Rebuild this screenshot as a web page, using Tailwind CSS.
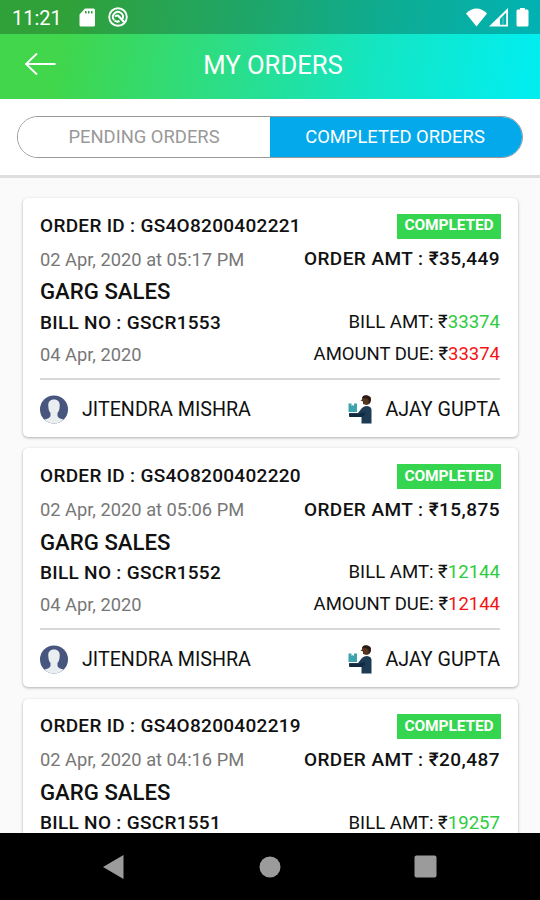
<!DOCTYPE html>
<html lang="en">
<head>
    <meta charset="UTF-8">
    <meta name="viewport" content="width=device-width, initial-scale=1.0">
    <title>My Orders</title>
    <script src="https://cdn.jsdelivr.net/npm/@tailwindcss/browser@4"></script>
</head>
<body class="w-[540px] h-[900px] overflow-hidden flex flex-col bg-[#fafafa] font-['Roboto','Noto_Sans',sans-serif] whitespace-nowrap">
    <!-- Header -->
    <header class="h-[99px] shrink-0 bg-linear-[100deg,#41d64b_12%,#27df92_48%,#13e6c4_70%,#02edee_97%] text-white">
        <!-- Status bar -->
        <div class="h-[34px] bg-black/25 flex items-center pl-3 pr-[11px]">
            <span class="text-[20px] leading-none w-[67px] pt-0.5">11:21</span>
            <svg class="w-4 h-[19px]" viewBox="0 0 16 19"><path fill="#fff" fill-rule="evenodd" d="M6 0.5H14.5Q16 .5 16 2V17Q16 18.5 14.5 18.5H2Q.5 18.5 .5 17V6.500ZM6 3V5.500H7.500V3ZM9 3V5.500H10.500V3ZM12 3V5.500H13.500V3Z"/></svg>
            <svg class="w-5 h-5 ml-[13px]" viewBox="0 0 20 20" fill="none" stroke="#fff"><circle cx="10" cy="10" r="8.800" stroke-width="1.900"/><path stroke-width="1.900" d="M6.200 13.200A5 5 0 1 1 14.500 12"/><path stroke-width="2.200" d="M7 9.500Q9.500 7.500 11 9.500L16 15M6.500 13.500Q9 15.500 11.500 14"/></svg>
            <div class="ml-auto flex items-center">
                <svg class="w-[21px] h-[19px]" viewBox="0 0 21 19"><path fill="#fff" d="M0 5.500Q10.500 -4.500 21 5.500L10.500 18.500Z"/></svg>
                <svg class="w-[19px] h-[19px] ml-[2px]" viewBox="0 0 19 19"><path fill="#fff" fill-rule="evenodd" d="M19 0V18.500H0ZM17.200 4.500L11 11V16.700H17.200Z"/><path fill="#fff" d="M13 16.700V10.500L15 8.500V16.700Z" opacity=".2"/></svg>
                <svg class="w-[13px] h-[19px] ml-[8px]" viewBox="0 0 13 19"><path fill="#fff" d="M4 0H9V1.500H11Q12.500 1.500 12.500 3V17Q12.500 18.500 11 18.500H2Q.5 18.500 .5 17V3Q.5 1.500 2 1.500H4Z"/></svg>
            </div>
        </div>
        <div class="h-[65px] grid grid-cols-[60px_1fr_60px] items-center">
            <svg class="w-[32px] h-6 ml-6 mb-[5px]" viewBox="0 0 32 24" fill="none" stroke="#fff" stroke-width="1.800"><path d="M31.500 12H2M13 1.500L2 12L13 22.500"/></svg>
            <h1 class="text-center text-[25.600px] leading-none pl-[6px] pb-px">MY ORDERS</h1>
        </div>
    </header>

    <!-- Tabs -->
    <div class="h-[79px] shrink-0 bg-white border-b-[3px] border-[#dedede] px-[17px] pt-[17px]">
        <div class="h-[42px] flex rounded-full overflow-hidden border border-[#999] text-[18.400px]">
            <button class="w-[252px] bg-white text-[#999]">PENDING ORDERS</button>
            <button class="flex-1 bg-[#03a9ea] text-white pr-0.5">COMPLETED ORDERS</button>
        </div>
    </div>

    <!-- Order list -->
    <main id="orders" class="flex-1 min-h-0 overflow-hidden flex flex-col gap-[11.300px] pl-[23px] pr-[22px] pt-5"></main>

    <!-- Navigation bar -->
    <nav class="h-[67px] shrink-0 bg-black flex items-center justify-between px-[103px]">
        <svg class="w-[21px] h-[26px]" viewBox="0 0 21 26"><path fill="#9b9b9b" d="M0 13L20.500 1V25Z"/></svg>
        <svg class="w-[22px] h-[22px] ml-0.5" viewBox="0 0 22 22"><circle cx="11" cy="11" r="10.500" fill="#9b9b9b"/></svg>
        <svg class="w-[23px] h-[23px]" viewBox="0 0 23 23"><rect x=".5" y=".5" width="22" height="22" rx="2" fill="#9b9b9b"/></svg>
    </nav>

    <script>
        const orders = [
            { id: 'GS4O8200402221', time: '05:17 PM', amt: '35,449', bill: 'GSCR1553', due: '33374' },
            { id: 'GS4O8200402220', time: '05:06 PM', amt: '15,875', bill: 'GSCR1552', due: '12144' },
            { id: 'GS4O8200402219', time: '04:16 PM', amt: '20,487', bill: 'GSCR1551', due: '19257' }
        ]

        const card = (o) => `
            <div class="h-[239px] shrink-0 bg-white rounded-[5px] shadow-[0_1px_3px_rgba(0,0,0,0.3)] pl-[17px] pr-[18px] pt-[13px] text-[19px] text-[#111]">
                <div class="h-[30px] flex items-center justify-between">
                    <span class="font-medium tracking-[0.300px]">ORDER ID : ${o.id}</span>
                    <span class="h-[25px] w-[104px] -mr-px bg-[#35d54f] text-white text-[15.500px] font-bold tracking-[-0.100px] flex items-center justify-center">COMPLETED</span>
                </div>
                <div class="h-[37px] flex items-center justify-between">
                    <span class="text-[18.300px] text-[#777]">02 Apr, 2020 at ${o.time}</span>
                    <span class="font-medium tracking-[0.450px]">ORDER AMT : ₹${o.amt}</span>
                </div>
                <div class="h-[28px] flex items-center text-[22.200px] font-medium">GARG SALES</div>
                <div class="h-[34px] flex items-center justify-between">
                    <span class="font-medium tracking-[0.300px]">BILL NO : ${o.bill}</span>
                    <span class="text-[18.600px]">BILL AMT: ₹<span class="text-[#2ecc40]">${o.due}</span></span>
                </div>
                <div class="h-[29px] flex items-center justify-between">
                    <span class="text-[18.300px] text-[#777]">04 Apr, 2020</span>
                    <span class="text-[18.500px]">AMOUNT DUE: ₹<span class="text-[#f51414]">${o.due}</span></span>
                </div>
                <div class="mt-[9px] border-t-2 border-[#d9d9d9] h-[60px] flex items-center text-[19.700px]">
                    <svg class="w-[28px] h-[29px]" viewBox="0 0 28 29"><circle cx="14" cy="14.500" r="14" fill="#47557f"/><path fill="#e9eef1" d="M14 4.500C9.500 4.500 8 7.500 8.300 11C8.500 15 9.500 17 10.500 18V21Q9.500 23.500 4.200 24.500A14 14 0 0 0 23.800 24.500Q18.500 23.500 17.500 21V18C18.500 17 19.500 15 19.700 11C20 7.500 18.500 4.500 14 4.500Z"/></svg>
                    <span class="ml-[14px] pt-px">JITENDRA MISHRA</span>
                    <svg class="w-[24px] h-[29px] ml-auto" viewBox="0 0 24 29"><path fill="#3fa3ad" d="M.5 8.500H3.500V11L4.500 10L6 11V8.500H9V17H.5Z"/><path fill="#56351f" d="M14 2Q16 0 19 .5Q23.500 1 23 5Q22.500 9.500 18.500 10L15 9V6.500L12.500 5.500L14 4.500Z"/><path fill="#2a1a16" d="M15 1Q19 -1 22.500 2.500Q23.500 6 21 9L20.500 5Q19 2.500 15 3Z"/><path fill="#1d3b53" d="M1 18H10L14 13Q16 11 19 11Q23.500 11.500 23.500 15V28.500H13.500V22H1.500Z"/><path fill="#122a3f" d="M1 19H11L17 17V20L13.500 22H1.500Z"/></svg>
                    <span class="ml-[13px] pt-px">AJAY GUPTA</span>
                </div>
            </div>`

        document.getElementById('orders').innerHTML = orders.map(card).join('')
    </script>
</body>
</html>
